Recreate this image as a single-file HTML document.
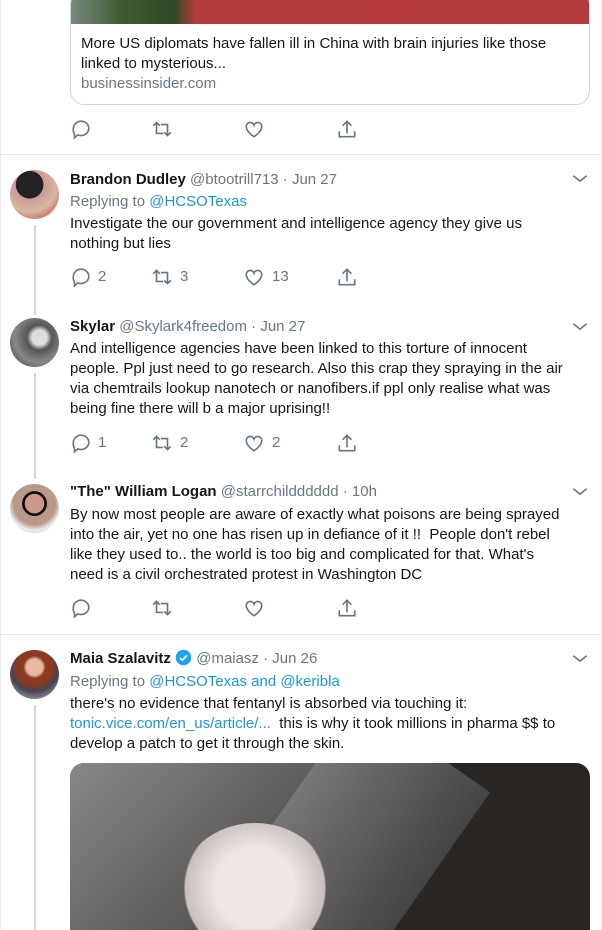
<!DOCTYPE html><html><head><meta charset="utf-8"><style>
body{margin:0;width:602px;height:930px;overflow:hidden;background:#fff;font-family:"Liberation Sans",Arial,sans-serif;color:#14171a;position:relative}
.a{position:absolute;white-space:nowrap}
.t{font-size:15px;line-height:20px}
.n{font-weight:bold}
.g{color:#657786}
.b{color:#1b95e0}
.av{position:absolute;left:10px;width:49px;height:49px;border-radius:50%;overflow:hidden}
.ln{position:absolute;left:34px;width:2px;background:#ccd6dd}
.ic{position:absolute;width:22px;height:22px}
.cnt{position:absolute;font-size:15px;color:#657786;line-height:20px}
.sep{position:absolute;left:0;width:602px;height:1px;background:#e6ecf0}
</style></head><body>
<div style="position:absolute;left:0;top:0;width:1px;height:930px;background:#e6ecf0"></div>
<div style="position:absolute;right:0;top:0;width:1px;height:930px;background:#e6ecf0"></div>
<div style="position:absolute;left:70px;top:-10px;width:518px;height:113px;border:1px solid #ccd6dd;border-radius:14px;overflow:hidden">
<div style="height:33px;background:linear-gradient(90deg,#7a8a80 0%,#3f5a2e 10%,#2f4a25 20%,#b33a3a 24%,#b73b3b 60%,#b33b3b 100%)"></div>
<div class="t" style="padding:10px 10px 0;white-space:normal">More US diplomats have fallen ill in China with brain injuries like those linked to mysterious...</div>
<div class="t g" style="padding:0 10px">businessinsider.com</div>
</div>
<svg width="0" height="0" style="position:absolute"><defs>
<g id="rp"><path d="M4 9.5a7 6.5 0 1 1 4 5.8L5 18v-3.5A6.5 6.5 0 0 1 4 9.5z" fill="none" stroke="#657786" stroke-width="1.5"/></g>
<g id="rt" fill="none" stroke="#657786" stroke-width="1.5"><path d="M2 7l3-3 3 3M5 4v10h6"/><path d="M18 13l-3 3-3-3M15 16V6H9"/></g>
<g id="lk"><path d="M10 17s-7-4.3-7-9a3.6 3.6 0 0 1 7-1.5A3.6 3.6 0 0 1 17 8c0 4.7-7 9-7 9z" fill="none" stroke="#657786" stroke-width="1.5"/></g>
<g id="sh" fill="none" stroke="#657786" stroke-width="1.5"><path d="M10 3v11M6 7l4-4 4 4M3 12v5h14v-5"/></g>
<g id="cv"><path d="M4 7l6 5 6-5" fill="none" stroke="#657786" stroke-width="1.5"/></g>
</defs></svg>
<svg class="ic" viewBox="0 0 20 20" style="left:69px;top:118px"><use href="#rp"/></svg>
<svg class="ic" viewBox="0 0 20 20" style="left:151px;top:118px"><use href="#rt"/></svg>
<svg class="ic" viewBox="0 0 20 20" style="left:243px;top:118px"><use href="#lk"/></svg>
<svg class="ic" viewBox="0 0 20 20" style="left:336px;top:118px"><use href="#sh"/></svg>
<div class="sep" style="top:154px"></div>

<div class="av" style="top:170px;background:radial-gradient(circle at 40% 30%,#222 0 30%,#c99 31%,#d8b8a0 60%,#b33 100%)"></div>
<div class="ln" style="top:225px;height:90px"></div>
<div class="a t" style="left:70px;top:170px"><span class="n">Brandon Dudley</span> <span class="g">@btootrill713 · Jun 27</span></div>
<svg class="ic" viewBox="0 0 20 20" style="left:569px;top:168px"><use href="#cv"/></svg>
<div class="a t g" style="left:70px;top:192px">Replying to <span class="b">@HCSOTexas</span></div>
<div class="a t" style="left:70px;top:214px">Investigate the our government and intelligence agency they give us<br>nothing but lies</div>
<svg class="ic" viewBox="0 0 20 20" style="left:69px;top:266px"><use href="#rp"/></svg><div class="cnt" style="left:98px;top:267px">2</div>
<svg class="ic" viewBox="0 0 20 20" style="left:151px;top:266px"><use href="#rt"/></svg><div class="cnt" style="left:180px;top:267px">3</div>
<svg class="ic" viewBox="0 0 20 20" style="left:243px;top:266px"><use href="#lk"/></svg><div class="cnt" style="left:272px;top:267px">13</div>
<svg class="ic" viewBox="0 0 20 20" style="left:336px;top:266px"><use href="#sh"/></svg>

<div class="av" style="top:318px;background:radial-gradient(circle at 60% 40%,#ddd 0 18%,#555 30%,#888 60%,#333 100%)"></div>
<div class="ln" style="top:373px;height:106px"></div>
<div class="a t" style="left:70px;top:317px"><span class="n">Skylar</span> <span class="g">@Skylark4freedom · Jun 27</span></div>
<svg class="ic" viewBox="0 0 20 20" style="left:569px;top:316px"><use href="#cv"/></svg>
<div class="a t" style="left:70px;top:339px">And intelligence agencies have been linked to this torture of innocent<br>people. Ppl just need to go research. Also this crap they spraying in the air<br>via chemtrails lookup nanotech or nanofibers.if ppl only realise what was<br>being fine there will b a major uprising!!</div>
<svg class="ic" viewBox="0 0 20 20" style="left:69px;top:432px"><use href="#rp"/></svg><div class="cnt" style="left:98px;top:433px">1</div>
<svg class="ic" viewBox="0 0 20 20" style="left:151px;top:432px"><use href="#rt"/></svg><div class="cnt" style="left:180px;top:433px">2</div>
<svg class="ic" viewBox="0 0 20 20" style="left:243px;top:432px"><use href="#lk"/></svg><div class="cnt" style="left:272px;top:433px">2</div>
<svg class="ic" viewBox="0 0 20 20" style="left:336px;top:432px"><use href="#sh"/></svg>

<div class="av" style="top:484px;background:radial-gradient(circle at 50% 40%,#c98 0 25%,#111 26% 32%,#b98 33% 55%,#eee 70%,#9ab 100%)"></div>
<div class="a t" style="left:70px;top:482px"><span class="n">"The" William Logan</span> <span class="g">@starrchildddddd · 10h</span></div>
<svg class="ic" viewBox="0 0 20 20" style="left:569px;top:481px"><use href="#cv"/></svg>
<div class="a t" style="left:70px;top:505px">By now most people are aware of exactly what poisons are being sprayed<br>into the air, yet no one has risen up in defiance of it !!&nbsp; People don't rebel<br>like they used to.. the world is too big and complicated for that. What's<br>need is a civil orchestrated protest in Washington DC</div>
<svg class="ic" viewBox="0 0 20 20" style="left:69px;top:597px"><use href="#rp"/></svg>
<svg class="ic" viewBox="0 0 20 20" style="left:151px;top:597px"><use href="#rt"/></svg>
<svg class="ic" viewBox="0 0 20 20" style="left:243px;top:597px"><use href="#lk"/></svg>
<svg class="ic" viewBox="0 0 20 20" style="left:336px;top:597px"><use href="#sh"/></svg>
<div class="sep" style="top:634px"></div>

<div class="av" style="top:650px;background:radial-gradient(circle at 50% 35%,#e8b9a0 0 20%,#8a3a20 28% 45%,#445 60%,#ccc 100%)"></div>
<div class="ln" style="top:705px;height:225px"></div>
<div class="a t" style="left:70px;top:649px"><span class="n">Maia Szalavitz</span> <svg width="17" height="17" style="vertical-align:-3px" viewBox="0 0 24 24"><circle cx="12" cy="12" r="11" fill="#1da1f2"/><path d="M7 12.5l3.3 3.2L17 9" fill="none" stroke="#fff" stroke-width="2.4"/></svg> <span class="g">@maiasz · Jun 26</span></div>
<svg class="ic" viewBox="0 0 20 20" style="left:569px;top:648px"><use href="#cv"/></svg>
<div class="a t g" style="left:70px;top:672px">Replying to <span class="b">@HCSOTexas and @keribla</span></div>
<div class="a t" style="left:70px;top:694px">there's no evidence that fentanyl is absorbed via touching it:<br><span class="b">tonic.vice.com/en_us/article/...</span>&nbsp; this is why it took millions in pharma $$ to<br>develop a patch to get it through the skin.</div>
<div style="position:absolute;left:70px;top:763px;width:520px;height:167px;border-radius:14px 14px 0 0;overflow:hidden;background:#2a2624">
<div style="position:absolute;left:0;top:0;width:300px;height:180px;background:linear-gradient(135deg,#8a8886,#5a5856 60%,#3a3836)"></div>
<div style="position:absolute;left:200px;top:-40px;width:160px;height:260px;background:linear-gradient(90deg,#777,#444);transform:rotate(35deg)"></div>
<div style="position:absolute;left:110px;top:60px;width:150px;height:130px;border-radius:50%;background:radial-gradient(circle,#f0e6e4 0 40%,#c8c0be 70%,transparent 72%)"></div>
</div>
</body></html>
